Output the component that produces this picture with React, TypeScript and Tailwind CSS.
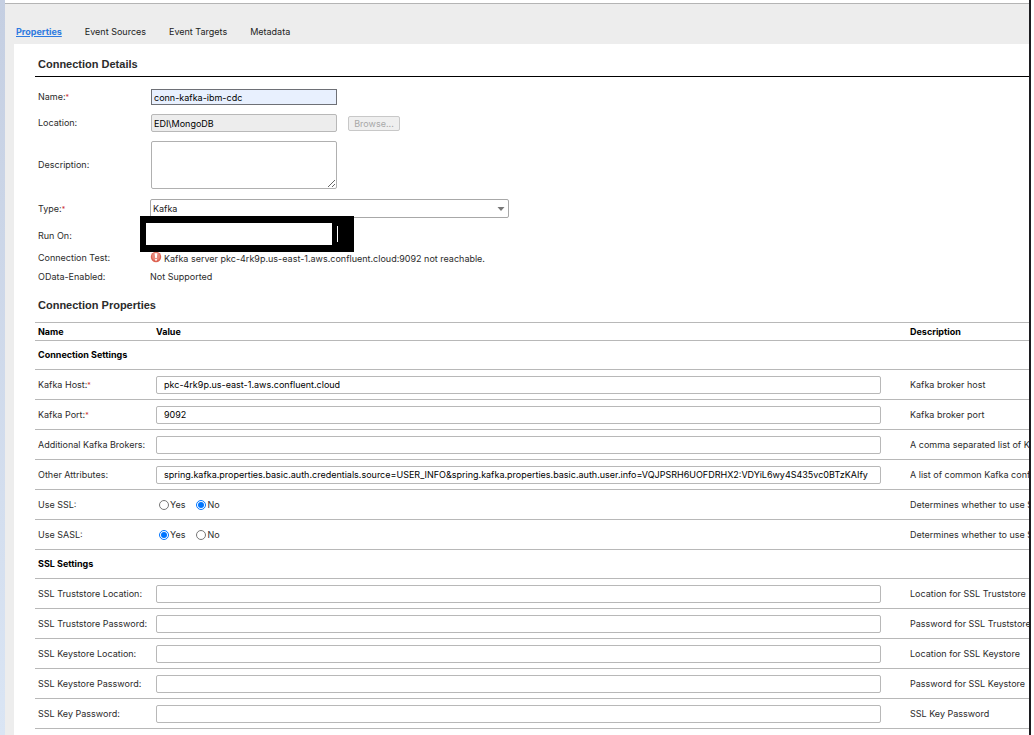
import { useState } from "react";
import type { ReactNode } from "react";

const TABS = ["Properties", "Event Sources", "Event Targets", "Metadata"];

type Property = {
  id: string;
  label: string;
  description: string;
  type: "text" | "password" | "boolean";
  required?: boolean;
};

type Section = {
  title: string;
  properties: Property[];
};

const SECTIONS: Section[] = [
  {
    title: "Connection Settings",
    properties: [
      { id: "host", label: "Kafka Host:", description: "Kafka broker host", type: "text", required: true },
      { id: "port", label: "Kafka Port:", description: "Kafka broker port", type: "text", required: true },
      { id: "brokers", label: "Additional Kafka Brokers:", description: "A comma separated list of Kafka brokers", type: "text" },
      { id: "attributes", label: "Other Attributes:", description: "A list of common Kafka configuration", type: "text" },
      { id: "useSsl", label: "Use SSL:", description: "Determines whether to use SSL", type: "boolean" },
      { id: "useSasl", label: "Use SASL:", description: "Determines whether to use SASL", type: "boolean" },
    ],
  },
  {
    title: "SSL Settings",
    properties: [
      { id: "truststoreLocation", label: "SSL Truststore Location:", description: "Location for SSL Truststore", type: "text" },
      { id: "truststorePassword", label: "SSL Truststore Password:", description: "Password for SSL Truststore", type: "password" },
      { id: "keystoreLocation", label: "SSL Keystore Location:", description: "Location for SSL Keystore", type: "text" },
      { id: "keystorePassword", label: "SSL Keystore Password:", description: "Password for SSL Keystore", type: "password" },
      { id: "keyPassword", label: "SSL Key Password:", description: "SSL Key Password", type: "password" },
    ],
  },
];

const INITIAL_VALUES: Record<string, string> = {
  host: "pkc-4rk9p.us-east-1.aws.confluent.cloud",
  port: "9092",
  attributes:
    "spring.kafka.properties.basic.auth.credentials.source=USER_INFO&spring.kafka.properties.basic.auth.user.info=VQJPSRH6UOFDRHX2:VDYiL6wy4S435vc0BTzKAIfy",
  useSsl: "No",
  useSasl: "Yes",
};

function Required() {
  return <span className="text-[7px] leading-none text-[#c33]">*</span>;
}

function ErrorIcon() {
  return (
    <svg viewBox="0 0 12 12" className="h-3 w-3 shrink-0 -translate-y-0.5" aria-hidden="true">
      <circle cx="6" cy="6" r="5.2" fill="#dd6353" />
      <circle cx="6" cy="5.2" r="4" fill="#e8887a" />
      <path d="M4.6 2.2h2.8L6.8 7H5.2z" fill="#fff" />
      <circle cx="6" cy="8.8" r="1" fill="#fff" />
    </svg>
  );
}

function FormRow({
  label,
  htmlFor,
  required,
  className,
  children,
}: {
  label: string;
  htmlFor?: string;
  required?: boolean;
  className: string;
  children: ReactNode;
}) {
  return (
    <div className={`flex items-center pl-[3px] ${className}`}>
      <label htmlFor={htmlFor} className="w-28 shrink-0">
        {label}
        {required && <Required />}
      </label>
      {children}
    </div>
  );
}

export default function App() {
  const [activeTab, setActiveTab] = useState("Properties");
  const [name, setName] = useState("conn-kafka-ibm-cdc");
  const [values, setValues] = useState(INITIAL_VALUES);

  const setValue = (id: string, value: string) => {
    setValues(prev => ({ ...prev, [id]: value }));
  };

  return (
    <div className="flex h-screen overflow-hidden bg-white font-[Inter,'Liberation_Sans',sans-serif] text-[9px] leading-3 text-[#2b2b2b]">
      <div className="w-[5px] shrink-0 bg-linear-to-b from-[#c5cfe2] to-[#dae5f4]" />

      <div className="mr-[3px] flex min-w-0 flex-1 flex-col border-r-2 border-[#1c1c20] pt-[3px]">
        {/* Tabs */}
        <nav className="flex h-[41px] shrink-0 items-end gap-[23px] border-t border-[#b4b4b4] bg-[#ededed] pb-1.5 pl-[11px]">
          {TABS.map(tab => (
            <a
              key={tab}
              href="#"
              onClick={e => {
                e.preventDefault();
                setActiveTab(tab);
              }}
              className={tab === activeTab ? "font-bold text-[#2f7be0] underline" : "text-[#222]"}
            >
              {tab}
            </a>
          ))}
        </nav>

        <main className="min-h-0 flex-1 overflow-hidden border-l-[9px] border-[#ededed] pl-[21px]">
          {/* Connection details */}
          <h2 className="flex h-[33px] items-center border-b border-black pl-[3px] pt-2 font-['Liberation_Sans',Arial,sans-serif] text-[11px] font-bold">
            Connection Details
          </h2>

          <form onSubmit={e => e.preventDefault()} className="pt-[7px]">
            <FormRow label="Name:" htmlFor="name" required className="h-[26px]">
              <input
                id="name"
                value={name}
                onChange={e => setName(e.target.value)}
                className="ml-px h-4 w-[186px] border border-[#6e7076] bg-[#e8f0fe] px-0.5 text-black outline-none"
              />
            </FormRow>

            <FormRow label="Location:" htmlFor="location" className="h-[26px]">
              <input
                id="location"
                readOnly
                value="EDI\MongoDB"
                className="ml-px h-[18px] w-[186px] rounded-xs border border-[#b8b8b8] bg-[#ededed] px-0.5 text-black outline-none"
              />
              <button
                type="button"
                disabled
                className="ml-[11px] h-[15px] w-[52px] rounded-xs border border-[#c8c8c8] bg-[#efefef] leading-none text-[#a8a8a8]"
              >
                Browse...
              </button>
            </FormRow>

            <FormRow label="Description:" htmlFor="description" className="h-[58px]">
              <textarea
                id="description"
                className="ml-px h-12 w-[186px] rounded-xs border border-[#b0b0b0] bg-white px-0.5 outline-none"
              />
            </FormRow>

            <FormRow label="Type:" htmlFor="type" required className="h-[29px]">
              <div className="relative w-[359px]">
                <select
                  id="type"
                  className="block h-[19px] w-full appearance-none rounded-xs border border-[#a8a8a8] bg-white px-0.5 text-[#222] outline-none"
                >
                  <option>Kafka</option>
                </select>
                <svg viewBox="0 0 8 4" className="pointer-events-none absolute right-1 top-2 h-1 w-2" aria-hidden="true">
                  <path d="M0.5 0h7L4 4z" fill="#777" />
                </svg>
              </div>
            </FormRow>

            <FormRow label="Run On:" htmlFor="runOn" className="relative h-[25px]">
              {/* Masked agent name */}
              <div className="absolute -top-[7px] left-[105px] z-10 flex h-9 w-[214px] items-center gap-[5px] bg-black pl-1.5">
                <input id="runOn" className="h-[22px] w-[186px] bg-white px-1 outline-none" />
                <span className="h-4 w-px bg-white" />
              </div>
            </FormRow>

            <FormRow label="Connection Test:" className="h-[19px]">
              <output className="flex items-center gap-0.5 whitespace-nowrap pt-0.5">
                <ErrorIcon />
                Kafka server pkc-4rk9p.us-east-1.aws.confluent.cloud:9092 not reachable.
              </output>
            </FormRow>

            <FormRow label="OData-Enabled:" className="h-[19px]">
              <output>Not Supported</output>
            </FormRow>

            {/* Connection properties */}
            <h2 className="flex h-9 items-center pl-[3px] pt-0.5 font-['Liberation_Sans',Arial,sans-serif] text-[11px] font-bold">
              Connection Properties
            </h2>

            <table className="w-full table-fixed border-collapse text-left">
              <colgroup>
                <col className="w-[121px]" />
                <col />
                <col className="w-[119px]" />
              </colgroup>
              <thead>
                <tr className="h-[18px] border-y border-[#b8b8b8] text-black">
                  <th className="pl-[3px]">Name</th>
                  <th>Value</th>
                  <th>Description</th>
                </tr>
              </thead>
              {SECTIONS.map(section => (
                <tbody key={section.title}>
                  <tr className="h-[29px] border-b border-[#b8b8b8] text-black">
                    <th colSpan={3} className="pl-[3px]">
                      {section.title}
                    </th>
                  </tr>
                  {section.properties.map(property => (
                    <tr key={property.id} className="h-[30px] border-b border-[#b8b8b8]">
                      <td className="whitespace-nowrap pl-[3px]">
                        <label htmlFor={property.type === "boolean" ? `${property.id}-Yes` : property.id}>
                          {property.label}
                        </label>
                        {property.required && <Required />}
                      </td>
                      <td className="pr-[29px]">
                        {property.type === "boolean" ? (
                          <div className="flex items-center gap-[11px] pl-[3px]">
                            {["Yes", "No"].map(option => (
                              <label key={option} className="flex items-center gap-px">
                                <input
                                  type="radio"
                                  id={`${property.id}-${option}`}
                                  name={property.id}
                                  checked={values[property.id] === option}
                                  onChange={() => setValue(property.id, option)}
                                  className="h-[10px] w-[10px]"
                                />
                                {option}
                              </label>
                            ))}
                          </div>
                        ) : (
                          <input
                            id={property.id}
                            type={property.type}
                            value={values[property.id] ?? ""}
                            onChange={e => setValue(property.id, e.target.value)}
                            className="block h-[18px] w-full rounded-xs border border-[#b8b8b8] bg-white pl-[7px] text-black outline-none"
                          />
                        )}
                      </td>
                      <td className="overflow-hidden whitespace-nowrap">{property.description}</td>
                    </tr>
                  ))}
                </tbody>
              ))}
            </table>
          </form>
        </main>
      </div>
    </div>
  );
}
